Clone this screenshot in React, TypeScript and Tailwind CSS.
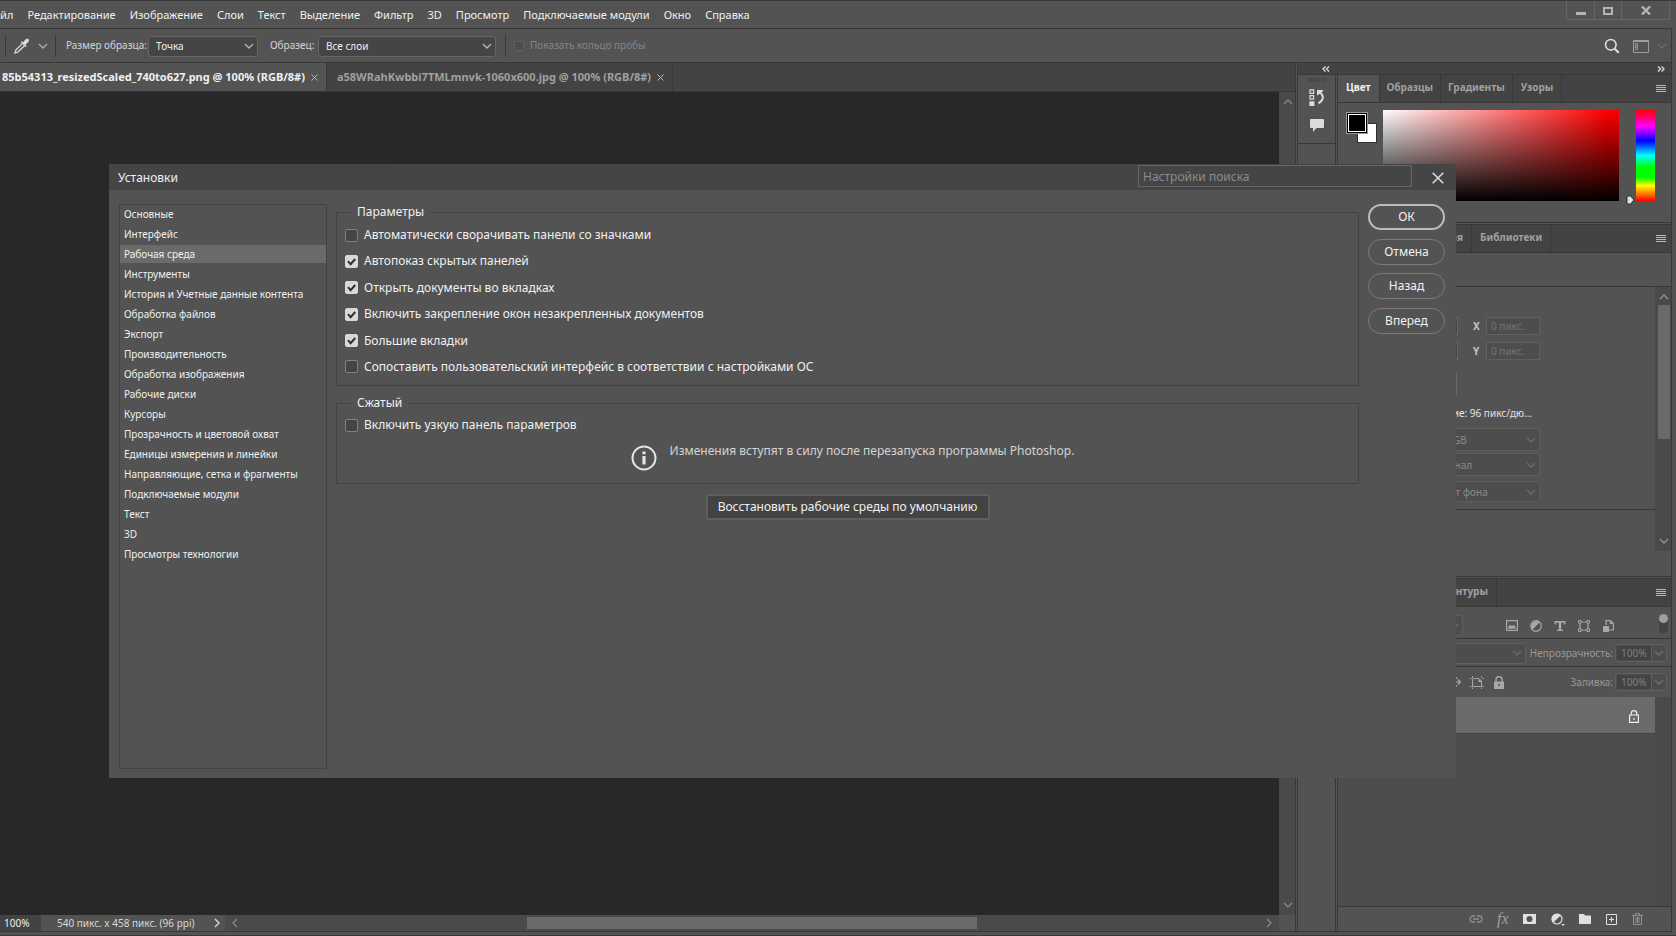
import React from "react";

const MENU = ["Файл", "Редактирование", "Изображение", "Слои", "Текст", "Выделение", "Фильтр", "3D", "Просмотр", "Подключаемые модули", "Окно", "Справка"];

const SECTIONS = [
  "Основные", "Интерфейс", "Рабочая среда", "Инструменты", "История и Учетные данные контента",
  "Обработка файлов", "Экспорт", "Производительность", "Обработка изображения", "Рабочие диски",
  "Курсоры", "Прозрачность и цветовой охват", "Единицы измерения и линейки",
  "Направляющие, сетка и фрагменты", "Подключаемые модули", "Текст", "3D", "Просмотры технологии",
];

const OPTIONS: [string, boolean][] = [
  ["Автоматически сворачивать панели со значками", false],
  ["Автопоказ скрытых панелей", true],
  ["Открыть документы во вкладках", true],
  ["Включить закрепление окон незакрепленных документов", true],
  ["Большие вкладки", true],
  ["Сопоставить пользовательский интерфейс в соответствии с настройками ОС", false],
];

function Chevron({ dir = "down", className = "" }: { dir?: "up" | "down" | "left" | "right"; className?: string }) {
  const d = { up: "M1 7l4-4 4 4", down: "M1 3l4 4 4-4", left: "M7 1L3 5l4 4", right: "M3 1l4 4-4 4" }[dir];
  return (
    <svg aria-hidden="true" viewBox="0 0 10 10" className={"size-[10px] shrink-0 fill-none stroke-current " + className} strokeWidth="1.4">
      <path d={d} />
    </svg>
  );
}

function Burger() {
  return (
    <button aria-label="Меню панели" className="ml-auto mr-[5px] self-center text-[#b8b8b8]">
      <svg viewBox="0 0 10 8" className="h-2 w-[10px]" shapeRendering="crispEdges" fill="currentColor">
        <path d="M0 0h10v1H0zM0 2h10v1H0zM0 4h10v1H0zM0 6h10v1H0z" />
      </svg>
    </button>
  );
}

function Select({ label, value, className = "", pad = "pl-[7px]", dim = false }: { label: string; value: string; className?: string; pad?: string; dim?: boolean }) {
  return (
    <span className={"relative flex items-center rounded-[3px] border " + (dim ? "border-[#5f5f5f] bg-[#4d4d4d] text-[#8a8a8a] " : "border-[#666] bg-[#454545] text-[#f0f0f0] ") + className}>
      <select aria-label={label} disabled={dim} defaultValue={value} className={"h-full w-full appearance-none bg-transparent pr-5 pt-px text-[10px] opacity-100 outline-none " + pad}>
        <option>{value}</option>
      </select>
      <Chevron className={"pointer-events-none absolute right-[3px] " + (dim ? "text-[#6a6a6a]" : "text-[#b4b4b4]")} />
    </span>
  );
}

function PanelTab({ children, active = false, className = "px-[7px]" }: { children: React.ReactNode; active?: boolean; className?: string }) {
  return (
    <button className={"flex h-full shrink-0 items-center border-r border-[#383838] pb-[2px] text-[10px] font-bold " + (active ? "-mb-px h-[28px] bg-[#535353] text-[#f0f0f0] " : "text-[#a0a0a0] ") + className}>
      {children}
    </button>
  );
}

function Check({ label, checked = false }: { label: string; checked?: boolean }) {
  return (
    <label className="flex h-[18px] items-center gap-[6px] text-[12px] leading-[18px] text-[#f0f0f0]">
      <span className="relative size-[13px] shrink-0">
        <input type="checkbox" defaultChecked={checked} className="peer block size-[13px] appearance-none rounded-[2px] border border-[#808080] bg-[#454545] checked:border-[#d8d8d8] checked:bg-[#d8d8d8]" />
        <svg aria-hidden="true" viewBox="0 0 13 13" className="pointer-events-none absolute inset-0 hidden size-[13px] fill-none stroke-[#303030] peer-checked:block" strokeWidth="2">
          <path d="M3 6.2l2.6 3L10.2 4" />
        </svg>
      </span>
      {label}
    </label>
  );
}

function PillButton({ children, primary = false }: { children: React.ReactNode; primary?: boolean }) {
  return (
    <button className={"h-[26px] rounded-full text-[12px] text-[#f2f2f2] " + (primary ? "border-2 border-[#bcbcbc]" : "border border-[#7a7a7a]")}>
      {children}
    </button>
  );
}

function Group({ title, children, className = "" }: { title: string; children: React.ReactNode; className?: string }) {
  return (
    <fieldset className={"min-w-0 border border-[#434343] px-2 " + className}>
      <legend className="ml-[6px] px-[6px] text-[12px] leading-[18px] text-[#f0f0f0]">{title}</legend>
      {children}
    </fieldset>
  );
}

function PreferencesDialog() {
  return (
    <section role="dialog" aria-label="Установки" className="absolute left-[109px] right-[220px] top-[164px] flex h-[614px] flex-col bg-[#535353]">
      <header className="flex h-[26px] shrink-0 items-center bg-[#454545] pl-[9px] pr-3">
        <h1 className="pt-[2px] text-[12px] text-[#f0f0f0]">Установки</h1>
        <input aria-label="Настройки поиска" placeholder="Настройки поиска" className="mb-[2px] ml-auto mr-[20px] h-[22px] w-[274px] border border-[#666] bg-[#454545] px-1 text-[12px] text-[#f0f0f0] outline-none placeholder:text-[#8c8c8c]" />
        <button aria-label="Закрыть" className="pt-px text-[#e0e0e0]">
          <svg viewBox="0 0 12 12" className="size-3 fill-none stroke-current" strokeWidth="1.5"><path d="M.7.7l10.6 10.6M11.3.7L.7 11.3" /></svg>
        </button>
      </header>
      <div className="flex min-h-0 flex-1 pl-[10px] pr-[11px]">
        <nav className="mb-[9px] mt-[14px] flex w-[208px] shrink-0 flex-col gap-[2px] border border-[#434343]">
          {SECTIONS.map((s, i) => (
            <button key={s} className={"h-[18px] shrink-0 px-1 text-left text-[10px] leading-[18px] text-[#f0f0f0] " + (i === 2 ? "bg-[#6a6a6a]" : "")}>{s}</button>
          ))}
        </nav>
        <div className="ml-[9px] mr-[9px] mt-[13px] min-w-0 flex-1">
          <Group title="Параметры" className="h-[183px]">
            <div className="mt-[5px] flex h-[150px] flex-col justify-between">
              {OPTIONS.map(([label, on]) => <Check key={label} label={label} checked={on} />)}
            </div>
          </Group>
          <Group title="Сжатый" className="mt-2 h-[90px]">
            <div className="mt-1"><Check label="Включить узкую панель параметров" /></div>
            <div className="mt-[10px] flex justify-center gap-[13px] pl-[10px]">
              <svg aria-hidden="true" viewBox="0 0 26 26" className="mt-px size-[26px]">
                <circle cx="13" cy="13" r="11.5" className="fill-none stroke-[#e4e4e4]" strokeWidth="2" />
                <path d="M11.4 11h3.2v8.5h-3.2zM11.4 6.5h3.2v2.8h-3.2z" className="fill-[#e4e4e4]" />
              </svg>
              <p className="text-[12px] leading-[14px] text-[#d4d4d4]">Изменения вступят в силу после перезапуска программы Photoshop.</p>
            </div>
          </Group>
          <button className="mx-auto mt-[10px] block h-[26px] w-[284px] rounded-[3px] border-2 border-[#5e5e5e] bg-[#434343] text-[12px] text-[#f0f0f0]">Восстановить рабочие среды по умолчанию</button>
        </div>
        <div className="mt-[14px] flex h-[130px] w-[77px] shrink-0 flex-col justify-between">
          <PillButton primary>ОК</PillButton>
          <PillButton>Отмена</PillButton>
          <PillButton>Назад</PillButton>
          <PillButton>Вперед</PillButton>
        </div>
      </div>
    </section>
  );
}

function OptionsBar() {
  return (
    <div className="mr-1 flex h-[35px] shrink-0 items-center border-y border-r border-[#383838] text-[10px] text-[#d4d4d4]">
      <i className="ml-[5px] h-[22px] w-px bg-[#383838]" />
      <button aria-label="Пипетка" className="ml-2 flex items-center gap-2 text-[#dcdcdc]">
        <svg viewBox="0 0 16 16" className="size-4">
          <path d="M8.3 5.6L2 11.9l-1 3.1 3-1 6.4-6.3" className="fill-none stroke-current" strokeWidth="1.3" />
          <path d="M6.6 4.2l1-1 1.3 1.2 2.3-2.7c1-1.2 2.4-1.3 3.2-.6.9.9.7 2.2-.5 3.3l-2.5 2.3 1.3 1.3-1 1z" fill="currentColor" />
        </svg>
        <Chevron className="text-[#a8a8a8]" />
      </button>
      <i className="ml-[7px] h-[22px] w-px bg-[#383838]" />
      <span className="ml-[10px] w-[82px]">Размер образца:</span>
      <Select label="Размер образца" value="Точка" className="mt-px h-[21px] w-[110px]" />
      <span className="ml-3 w-[48px]">Образец:</span>
      <Select label="Образец" value="Все слои" className="mt-px h-[21px] w-[178px]" />
      <i className="ml-[9px] h-[22px] w-px bg-[#383838]" />
      <label className="ml-2 flex items-center gap-[6px] text-[#858585]">
        <input type="checkbox" disabled className="size-[10px] appearance-none rounded-[2px] border border-[#616161] bg-[#4d4d4d]" />
        Показать кольцо пробы
      </label>
      <button aria-label="Поиск" className="ml-auto text-[#dcdcdc]">
        <svg viewBox="0 0 16 16" className="size-4 fill-none stroke-current"><circle cx="6.8" cy="6.8" r="5.3" strokeWidth="1.6" /><path d="M10.7 10.7l4 4" strokeWidth="2.2" /></svg>
      </button>
      <button aria-label="Рабочая среда" className="ml-[13px] mt-px text-[#9c9c9c]">
        <svg viewBox="0 0 16 13" className="h-[13px] w-4 fill-none stroke-current"><path d="M.5.5h15v12H.5zM.5 1.5h15" /><path d="M2.5 3.5h2v6h-2zM2.5 5.5h2M2.5 7.5h2" strokeWidth=".8" /></svg>
      </button>
      <Chevron className="ml-2 mr-1 text-[#6a6a6a]" />
    </div>
  );
}

function TitleBar() {
  return (
    <header className="flex h-[28px] shrink-0 items-start border-t border-[#383838]">
      <nav className="-ml-[15px] flex h-[27px] items-center gap-[14px] whitespace-nowrap pt-px text-[11px] text-[#f0f0f0]">
        {MENU.map((m) => <button key={m}>{m}</button>)}
      </nav>
      <div className="ml-auto mr-[6px] flex h-[19px] rounded-b-[3px] border border-t-0 border-[#666] text-[#b4b4b4]">
        <button aria-label="Свернуть" className="flex w-[28px] items-center justify-center border-r border-[#666]">
          <svg viewBox="0 0 10 10" className="mt-[2px] size-[10px]"><path d="M0 6h10v3H0z" fill="currentColor" /></svg>
        </button>
        <button aria-label="Развернуть" className="flex w-[27px] items-center justify-center border-r border-[#666]">
          <svg viewBox="0 0 10 8" className="mt-[2px] h-2 w-[10px] fill-none stroke-current" strokeWidth="2"><path d="M1 1h8v6H1z" /></svg>
        </button>
        <button aria-label="Закрыть окно" className="flex w-[47px] items-center justify-center">
          <svg viewBox="0 0 10 9" className="h-[9px] w-[10px] fill-none stroke-current" strokeWidth="2.4"><path d="M1 .5l8 8M9 .5l-8 8" /></svg>
        </button>
      </div>
    </header>
  );
}

function DocTab({ title, active = false, className }: { title: string; active?: boolean; className: string }) {
  return (
    <div className={"flex h-full items-center gap-[6px] border-r border-[#383838] pr-2 text-[11px] font-bold " + (active ? "bg-[#535353] text-[#f0f0f0] " : "text-[#a0a0a0] ") + className}>
      <button className="whitespace-nowrap">{title}</button>
      <button aria-label="Закрыть вкладку" className="text-[#b8b8b8]">
        <svg viewBox="0 0 7 7" className="size-[7px] stroke-current"><path d="M.5.5l6 6M6.5.5l-6 6" /></svg>
      </button>
    </div>
  );
}

function Workspace() {
  return (
    <main className="mr-[1px] flex min-w-0 flex-1 flex-col border-r border-[#383838]">
      <div className="flex h-[29px] shrink-0 border-b border-[#383838] bg-[#434343]">
        <DocTab active title="85b54313_resizedScaled_740to627.png @ 100% (RGB/8#)" className="pl-[2px]" />
        <DocTab title="a58WRahKwbbi7TMLmnvk-1060x600.jpg @ 100% (RGB/8#)" className="pl-[10px]" />
      </div>
      <div className="flex min-h-0 flex-1">
        <div className="flex-1 bg-[#282828] pl-[109px]">
          <div className="h-[72px] w-[288px] bg-[#27292a]" />
        </div>
        <div className="flex w-4 flex-col items-center justify-between bg-[#4a4a4a] py-[5px] pl-px text-[#848484]">
          <Chevron dir="up" />
          <Chevron />
        </div>
      </div>
      <footer className="flex h-4 shrink-0 items-center bg-[#4a4a4a] text-[10px]">
        <span className="flex h-full w-[41px] items-center bg-[#434343] pl-1 text-[#f0f0f0]">100%</span>
        <span className="flex h-full w-[184px] items-center bg-[#535353] pl-4 text-[#d8d8d8]">540 пикс. x 458 пикс. (96 ppi)<Chevron dir="right" className="ml-auto mr-[3px]" /></span>
        <Chevron dir="left" className="ml-[5px] text-[#848484]" />
        <span className="flex h-full flex-1 items-center">
          <i className="flex-[7]" />
          <i className="h-3 flex-[11] bg-[#6a6a6a]" />
          <i className="flex-[7]" />
        </span>
        <Chevron dir="right" className="mr-[5px] text-[#848484]" />
        <i className="h-full w-4 bg-[#535353]" />
      </footer>
    </main>
  );
}

function IconRail() {
  return (
    <aside className="flex w-[38px] shrink-0 flex-col border-r border-[#383838]">
      <div className="flex h-[69px] flex-col items-center gap-[7px] border-b border-[#383838] pt-[3px] text-[#dcdcdc]">
        <svg aria-hidden="true" viewBox="0 0 19 4" className="h-1 w-[19px] fill-[#434343]"><path d="M0 0h1v4H0zM2 0h1v4H2zM4 0h1v4H4zM6 0h1v4H6zM8 0h1v4H8zM10 0h1v4h-1zM12 0h1v4h-1zM14 0h1v4h-1zM16 0h1v4h-1zM18 0h1v4h-1z" /></svg>
        <button aria-label="История">
          <svg viewBox="0 0 16 17" className="block h-[17px] w-4 fill-none stroke-current"><path d="M1 .8h3.6v3.6H1zM1 6.6h3.6v3.6H1z" strokeWidth="1.2" /><path d="M.4 12.2h5V17h-5zM8 1h6.5L13 3l-.8 1L8 6.5z" fill="currentColor" stroke="none" /><path d="M11.5 4c3.6 3.2 3.2 7-1.9 10.3" strokeWidth="2" /></svg>
        </button>
        <button aria-label="Комментарии" className="mt-[6px]">
          <svg viewBox="0 0 14 13" className="block h-[13px] w-[14px]"><path d="M1 0h12q1 0 1 1v7q0 1-1 1H6.5L3 13V9H1Q0 9 0 8V1Q0 0 1 0z" fill="currentColor" /></svg>
        </button>
      </div>
    </aside>
  );
}

function ColorPanel() {
  return (
    <section className="flex h-[148px] shrink-0 flex-col border-b border-[#383838]">
      <div className="flex h-[28px] shrink-0 border-b border-[#383838] bg-[#434343]">
        <PanelTab active className="px-2">Цвет</PanelTab>
        <PanelTab>Образцы</PanelTab>
        <PanelTab>Градиенты</PanelTab>
        <PanelTab className="px-2">Узоры</PanelTab>
        <Burger />
      </div>
      <div className="flex pl-2 pt-[7px]">
        <div className="relative mt-[2px] h-[31px] w-[31px]">
          <i className="absolute bottom-0 right-0 size-5 border border-[#303030] bg-white" />
          <i className="absolute left-0 top-0 size-[22px] border border-[#999] bg-black outline-1 -outline-offset-3 outline-white" />
        </div>
        <div className="ml-[6px] h-[91px] flex-1 bg-[linear-gradient(to_top,#000,transparent),linear-gradient(to_right,#fff,#f00_95%)]" />
        <div className="flex w-[17px] items-end justify-end">
          <svg aria-hidden="true" viewBox="0 0 9 10" className="-mb-[4px] mr-[1px] h-[10px] w-[9px]"><path d="M1 1h3.5l3.5 4-3.5 4H1z" className="fill-[#e4e4e4] stroke-[#303030]" /></svg>
        </div>
        <div className="mr-4 h-[91px] w-[19px] bg-[linear-gradient(to_bottom,#f00,#f0f_18%,#00f_34%,#0ff_50%,#0f0_63%,#0f0_74%,#ff0_83%,#f00)]" />
      </div>
    </section>
  );
}

function Coord({ name }: { name: string }) {
  return (
    <div className="flex h-[18px] items-center">
      <i className="h-full w-[120px] border border-[#686868] bg-[#454545]" />
      <label htmlFor={"coord" + name} className="ml-[15px] w-[13px] text-[10px] font-bold text-[#c4c4c4]">{name}</label>
      <input id={"coord" + name} disabled defaultValue="0 пикс." className="h-[18px] w-[54px] border border-[#606060] bg-[#4d4d4d] pl-1 text-[10px] text-[#747474]" />
    </div>
  );
}

function PropertiesPanel() {
  return (
    <section className="mt-[1px] flex h-[353px] shrink-0 flex-col border-y border-[#383838]">
      <div className="flex h-[28px] shrink-0 border-b border-[#383838] bg-[#434343]">
        <PanelTab className="w-[134px] justify-end pr-2">Коррекция</PanelTab>
        <PanelTab className="px-2">Библиотеки</PanelTab>
        <Burger />
      </div>
      <div className="h-[34px] shrink-0 border-b border-[#383838]" />
      <div className="flex h-[264px]">
        <div className="flex-1">
          <div className="flex h-[223px] flex-col border-b border-[#383838] pt-[30px]">
            <Coord name="X" />
            <div className="mt-[7px]"><Coord name="Y" /></div>
            <i className="mt-3 h-6 w-[119px] rounded-[2px] border border-[#686868]" />
            <p className="ml-[27px] mt-[10px] w-[167px] text-right text-[10px] leading-[14px] text-[#e4e4e4]">Разрешение: 96 пикс/дю...</p>
            <div className="ml-[69px] mt-2 flex w-[133px] flex-col">
              <Select dim label="Режим" value="Цвет RGB" pad="pl-[13px]" className="h-[23px]" />
              <Select dim label="Глубина" value="8 бит/канал" className="mt-[2px] h-[23px]" />
              <Select dim label="Заливка холста" value="Цвет фона" pad="pl-[29px]" className="mt-[5px] h-[21px]" />
            </div>
          </div>
        </div>
        <div className="flex w-4 flex-col items-center bg-[#4a4a4a] py-[5px] pl-px text-[#909090]">
          <Chevron dir="up" />
          <i className="mt-[3px] h-[134px] w-3 bg-[#6a6a6a]" />
          <Chevron className="mt-auto" />
        </div>
      </div>
    </section>
  );
}

function Percent({ label }: { label: string }) {
  const id = "pct" + label;
  return (
    <>
      <label htmlFor={id} className="ml-auto mr-[2px] text-[10px] text-[#989898]">{label}:</label>
      <span className="mr-1 flex h-[18px] w-[52px] items-center rounded-[3px] border border-[#606060] bg-[#4d4d4d]">
        <input id={id} disabled defaultValue="100%" className="ml-[1px] h-[14px] w-[34px] bg-[#434343] pl-1 text-[10px] text-[#808080]" />
        <button aria-label={label + " — шкала"} className="flex h-full flex-1 items-center justify-center border-l border-[#606060] text-[#6e6e6e]"><Chevron /></button>
      </span>
    </>
  );
}

function LayersPanel() {
  return (
    <section className="mt-[1px] flex min-h-0 flex-1 flex-col border-t border-[#383838]">
      <div className="flex h-[28px] shrink-0 border-b border-[#383838] bg-[#434343]">
        <PanelTab className="w-[159px] justify-end pr-2">Контуры</PanelTab>
        <Burger />
      </div>
      <div className="flex h-[32px] shrink-0 items-center border-b border-[#383838] text-[#a8a8a8]">
        <Select dim label="Тип слоя" value="" className="mt-[6px] h-[21px] w-[125px]" />
        <div className="ml-[43px] mt-[6px] flex items-center gap-[12px]">
          <svg aria-hidden="true" viewBox="0 0 12 11" className="h-[11px] w-3"><path d="M.6.6h10.8v9.8H.6z" className="fill-none stroke-current" strokeWidth="1.2" /><path d="M2.3 8.7V7l2-2.5L6 6.5 7.5 4.6l2.2 2.6v1.5z" fill="currentColor" /></svg>
          <svg aria-hidden="true" viewBox="0 0 12 12" className="size-3"><circle cx="6" cy="6" r="5.3" className="fill-none stroke-current" strokeWidth="1.2" /><path d="M2.3 9.7A5.3 5.3 0 019.7 2.3z" fill="currentColor" /></svg>
          <svg aria-hidden="true" viewBox="0 0 12 12" className="size-3"><path d="M.5 1h11v3.5h-1.2L9.7 2.7H7.2v7H9V11H3V9.7h1.8v-7H2.3L1.7 4.5H.5z" fill="currentColor" /></svg>
          <svg aria-hidden="true" viewBox="0 0 12 12" className="size-3 fill-none stroke-current"><path d="M2 2h8v8H2z" strokeWidth="1.2" /><path d="M.5.5h2.5v2.5H.5zM9 .5h2.5v2.5H9zM.5 9h2.5v2.5H.5zM9 9h2.5v2.5H9z" fill="#535353" /></svg>
          <svg aria-hidden="true" viewBox="0 0 12 12" className="size-3"><path d="M4 5V.6h4.5L11.4 3.5v6.5H6.5" className="fill-none stroke-current" strokeWidth="1.2" /><path d="M1 6h6v6H1zM7.8.5l3.7 3.6H7.8z" fill="currentColor" /></svg>
        </div>
        <button aria-label="Фильтрация слоев" className="ml-auto mr-[3px] mt-[2px] h-[19px] w-[9px] rounded-full bg-[#434343]"><i className="mb-[10px] block size-[9px] rounded-full bg-[#a0a0a0]" /></button>
      </div>
      <div className="flex h-[28px] shrink-0 items-center border-b border-[#383838] pt-px">
        <Select dim label="Режим наложения" value="" className="h-[21px] w-[188px]" />
        <Percent label="Непрозрачность" />
      </div>
      <div className="flex h-[30px] shrink-0 items-center text-[#a8a8a8]">
        <svg aria-hidden="true" viewBox="0 0 12 12" className="ml-[111px] size-3 fill-none stroke-current" strokeWidth="1.2"><path d="M6 0v12M0 6h11M4 2.5L6 .7l2 1.8M4 9.5l2 1.8 2-1.8M2.5 4L.7 6l1.8 2M9 3.5L11.3 6 9 8.5" /></svg>
        <svg aria-hidden="true" viewBox="0 0 14 13" className="ml-[9px] h-[13px] w-[14px] fill-none stroke-current"><path d="M2.5 0v2M2.5 3v7.5M0 2.5h1.5M3 2.5h6l2.5 2.5v5.5H2.5M11.5 0v1.5M12.5 2.5H14M0 10.5h1.5M12.5 10.5H14M2.5 11.5V13M11.5 11.5V13" /><path d="M8.5 2.5L12 6H8.5z" fill="currentColor" stroke="none" /></svg>
        <svg aria-hidden="true" viewBox="0 0 10 13" className="ml-[10px] h-[13px] w-[10px]"><path d="M2 6V3.8a3 3 0 016 0V6" className="fill-none stroke-current" strokeWidth="1.4" /><path d="M0 5.5h10V13H0zM4.2 8v2h1.6V8z" fill="currentColor" fillRule="evenodd" /></svg>
        <Percent label="Заливка" />
      </div>
      <div className="flex min-h-0 flex-1 border-b border-[#383838]">
        <div className="flex-1 bg-[#4d4d4d]">
          <div className="flex h-[37px] items-center justify-end border-b border-[#444] bg-[#6a6a6a] pr-4 pt-[2px] text-[#f0f0f0]">
            <svg aria-hidden="true" viewBox="0 0 10 13" className="h-[13px] w-[10px] fill-none stroke-current" strokeWidth="1.2"><path d="M2.3 5V3.3a2.7 2.7 0 015.4 0V5M.6 5h8.8v7.3H.6z" /><path d="M4.2 8.2h1.6v1.6H4.2z" fill="currentColor" stroke="none" /></svg>
          </div>
        </div>
        <i className="w-4 bg-[#4a4a4a]" />
      </div>
      <div className="flex h-[24px] shrink-0 items-center justify-end gap-[14px] pr-[28px] text-[#e0e0e0]">
        <svg aria-hidden="true" viewBox="0 0 14 8" className="h-2 w-[14px] fill-none stroke-[#909090]" strokeWidth="1.3"><path d="M6 1H4a3 3 0 000 6h2M8 1h2a3 3 0 010 6H8M4 4h6" /></svg>
        <span className="w-3 font-['Liberation_Serif',serif] text-[16px] italic leading-none text-[#a0a0a0]">fx</span>
        <svg aria-hidden="true" viewBox="0 0 13 10" className="h-[10px] w-[13px]"><path d="M0 0h13v10H0zM6.5 2a3 3 0 100 6 3 3 0 000-6z" fill="currentColor" fillRule="evenodd" /></svg>
        <svg aria-hidden="true" viewBox="0 0 14 14" className="ml-px size-[14px]"><circle cx="6" cy="7" r="5" className="fill-none stroke-current" strokeWidth="1.2" /><path d="M2.2 10.8A5.4 5.4 0 019.8 3.2zM10 12h4l-2 2z" fill="currentColor" /></svg>
        <svg aria-hidden="true" viewBox="0 0 12 10" className="h-[10px] w-3"><path d="M0 0h5l1 1.5h6V10H0z" fill="currentColor" /></svg>
        <svg aria-hidden="true" viewBox="0 0 11 11" className="ml-px size-[11px] fill-none stroke-current"><path d="M.5.5h10v10H.5zM5.5 3v5M3 5.5h5" /></svg>
        <svg aria-hidden="true" viewBox="0 0 11 12" className="ml-px h-3 w-[11px] fill-none stroke-[#909090]"><path d="M0 2.5h11M3.5 2V.5h4V2M1.5 2.5v9h8v-9M4 4v6M5.5 4v6M7 4v6" /></svg>
      </div>
    </section>
  );
}

export default function App() {
  return (
    <div className="relative flex h-screen min-h-[820px] flex-col overflow-hidden bg-[#535353] font-['Noto_Sans',sans-serif]">
      <TitleBar />
      <OptionsBar />
      <div className="mr-1 flex min-h-0 flex-1 border-b border-r border-[#383838]">
        <Workspace />
        <div className="flex w-[374px] shrink-0 flex-col border-l border-[#383838]">
          <div className="flex h-[12px] shrink-0 items-center border-b border-[#383838] bg-[#434343] text-[#dcdcdc]">
            <svg aria-hidden="true" viewBox="0 0 8 6" className="ml-6 h-[6px] w-2 fill-none stroke-current" strokeWidth="1.3"><path d="M3.5.5L1 3l2.5 2.5M7 .5L4.5 3 7 5.5" /></svg>
            <svg aria-hidden="true" viewBox="0 0 8 6" className="ml-auto mr-[6px] h-[6px] w-2 fill-none stroke-current" strokeWidth="1.3"><path d="M1 .5L3.5 3 1 5.5M4.5.5L7 3 4.5 5.5" /></svg>
          </div>
          <div className="flex min-h-0 flex-1">
            <IconRail />
            <div className="ml-[1px] flex min-w-0 flex-1 flex-col border-l border-[#383838]">
              <ColorPanel />
              <PropertiesPanel />
              <LayersPanel />
            </div>
          </div>
        </div>
      </div>
      <i className="h-1 shrink-0 border-b border-[#383838]" />
      <PreferencesDialog />
    </div>
  );
}
